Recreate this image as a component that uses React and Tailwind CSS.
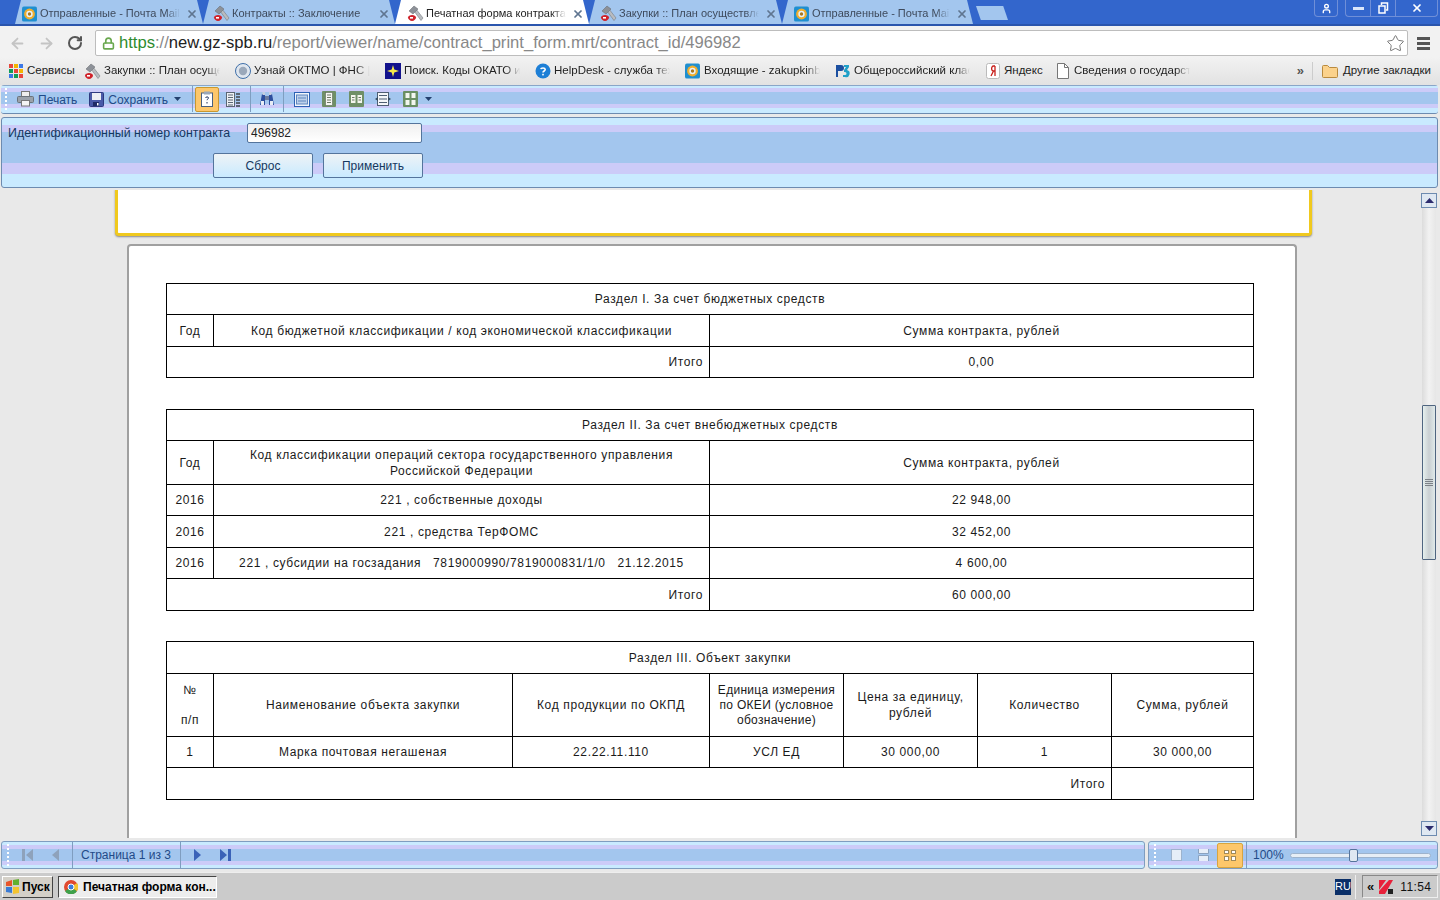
import { ArrowLeft, ArrowRight, RotateCw, Star, Lock, X, User } from "lucide-react";

const barStripes = "bg-[linear-gradient(to_bottom,#c9eaff_0,#c9eaff_3px,#cccbf8_3px,#cccbf8_7px,#a3c6ee_7px,#a3c6ee_19px,#cccbf8_19px,#cccbf8_23px,#c9eaff_23px,#c9eaff_100%)]";

const MailIcon = () => (
  <svg width="15" height="16" viewBox="0 0 16 16" className="shrink-0">
    <rect width="16" height="16" rx="2" fill="#1f8fd0" />
    <circle cx="8" cy="8" r="5.8" fill="#f0ae2e" />
    <circle cx="8" cy="8" r="3.4" fill="#e9f2f8" />
    <circle cx="8" cy="8" r="1.8" fill="#a9781f" />
  </svg>
);

const HammerIcon = () => (
  <svg width="17" height="17" viewBox="0 0 17 17" className="shrink-0">
    <path d="M7 6l2-2 7 9-2 2.5z" fill="#b9bcc0" stroke="#777c82" strokeWidth=".6" />
    <path d="M2 6l5-5 4 3-5 5z" fill="#8d9198" stroke="#62666c" strokeWidth=".5" />
    <path d="M1 12.5C1 11 3 10 5 10s4 1 4 2.5S7 16 5 16s-4-2-4-3.5z" fill="#d0222a" />
    <rect x="3" y="12" width="3" height="1.6" fill="#fff" />
  </svg>
);

const tabs = [
  { title: "Отправленные - Почта Mail", icon: <MailIcon />, w: "w-[188px] pl-[6px]" },
  { title: "Контракты :: Заключение", icon: <HammerIcon />, w: "w-[192px] pl-[10px]" },
  { title: "Печатная форма контракта", icon: <HammerIcon />, w: "w-[194px] pl-[12px]", active: true },
  { title: "Закупки :: План осуществления", icon: <HammerIcon />, w: "w-[193px] pl-[11px]" },
  { title: "Отправленные - Почта Mail", icon: <MailIcon />, w: "w-[191px] pl-[11px]" },
];

const bookmarks = [
  { title: "Сервисы", w: "w-[77px]", icon: <AppsIcon />, plain: true },
  { title: "Закупки :: План осуществления", w: "w-[150px]", icon: <HammerIcon /> },
  { title: "Узнай ОКТМО | ФНС | 77", w: "w-[150px]", icon: <SealIcon /> },
  { title: "Поиск. Коды ОКАТО и ОКТМО", w: "w-[150px]", icon: <StarBlueIcon /> },
  { title: "HelpDesk - служба техподдержки", w: "w-[150px]", icon: <HelpIcon /> },
  { title: "Входящие - zakupkinb@mail.ru", w: "w-[150px]", icon: <MailIcon /> },
  { title: "Общероссийский классификатор", w: "w-[150px]", icon: <RbIcon /> },
  { title: "Яндекс", w: "w-[70px]", icon: <YandexIcon />, plain: true },
  { title: "Сведения о государственных", w: "w-[150px]", icon: <PageIcon /> },
];

function AppsIcon() {
  const colors = ["#e8453c", "#f4b400", "#3b78e7", "#0f9d58", "#e8453c", "#f4b400", "#3b78e7", "#0f9d58", "#e8453c"];
  return (
    <div className="grid grid-cols-3 gap-px w-[14px] h-[14px] shrink-0">
      {colors.map((c, i) => <svg key={i} viewBox="0 0 4 4" className="w-full h-full"><rect width="4" height="4" fill={c} /></svg>)}
    </div>
  );
}

function SealIcon() {
  return (
    <svg width="16" height="16" viewBox="0 0 16 16" className="shrink-0">
      <circle cx="8" cy="8" r="7.5" fill="#dfe6ee" stroke="#3f6fa8" />
      <circle cx="8" cy="8" r="4.2" fill="#9aa8ba" />
    </svg>
  );
}

function StarBlueIcon() {
  return (
    <svg width="16" height="16" viewBox="0 0 16 16" className="shrink-0">
      <rect width="16" height="16" fill="#12128c" />
      <path d="M8 2l1.3 4.4L14 8l-4.7 1.6L8 14l-1.3-4.4L2 8l4.7-1.6z" fill="#f6e84a" />
    </svg>
  );
}

function HelpIcon() {
  return (
    <svg width="16" height="16" viewBox="0 0 16 16" className="shrink-0">
      <circle cx="8" cy="8" r="7.5" fill="#1d7fd6" />
      <path d="M5.8 6.2C6 4.6 10 4.4 10.2 6.4 10.3 8 8 8 8 9.6" fill="none" stroke="#fff" strokeWidth="1.6" />
      <rect x="7.2" y="10.8" width="1.6" height="1.6" fill="#fff" />
    </svg>
  );
}

function RbIcon() {
  return (
    <svg width="16" height="14" viewBox="0 0 16 14" className="shrink-0">
      <path d="M1 1h5a3 3 0 010 6H3v6H1z" fill="#1b4fa0" />
      <path d="M9 1h5v2l-2 3a3 3 0 01-2 7H8v-2h2a1 1 0 000-3H9V6l2-3H9z" fill="#20a0c8" />
    </svg>
  );
}

function YandexIcon() {
  return (
    <svg width="14" height="16" viewBox="0 0 14 16" className="shrink-0">
      <rect x=".5" y=".5" width="13" height="15" rx="2" fill="#fff" stroke="#bbb" />
      <path d="M9 3v10M9 3H7.5C5 3 5 7.8 7.5 8H9M7.5 8L5 13" fill="none" stroke="#c8201c" strokeWidth="1.3" />
    </svg>
  );
}

function PageIcon() {
  return (
    <svg width="12" height="16" viewBox="0 0 12 16" className="shrink-0">
      <path d="M.5.5h7l4 4v11H.5z" fill="#fff" stroke="#777" />
      <path d="M7.5.5v4h4" fill="none" stroke="#777" />
    </svg>
  );
}

const PrintIcon = () => (
  <svg width="17" height="16" viewBox="0 0 17 16" className="shrink-0">
    <rect x="4.5" y=".5" width="8" height="6" fill="#eee" stroke="#777" />
    <rect x=".5" y="5.5" width="16" height="6" rx="1" fill="#9aa1aa" stroke="#6b727b" />
    <rect x="4.5" y="9.5" width="8" height="5.5" fill="#f4f4f4" stroke="#777" />
  </svg>
);

const SaveIcon = () => (
  <svg width="15" height="15" viewBox="0 0 15 15" className="shrink-0">
    <rect x=".5" y=".5" width="14" height="14" rx="1" fill="#4a5aa8" stroke="#2e3a80" />
    <rect x="3" y="1" width="9" height="7" fill="#eceef4" />
    <rect x="4" y="10" width="6" height="4" fill="#1f2a66" />
    <rect x="8" y="11" width="1.5" height="2.5" fill="#fff" />
  </svg>
);

const Grip = () => (
  <div className="flex flex-col gap-[2px] shrink-0">
    {[0, 1, 2, 3, 4, 5].map((i) => <span key={i} className="block w-[2px] h-[2px] bg-white" />)}
  </div>
);

const Sep = ({ className = "" }) => <span className={`block w-px h-[26px] bg-[#7f9dc0] shrink-0 ${className}`} />;

const Caret = ({ className = "" }) => (
  <svg width="7" height="4" viewBox="0 0 7 4" className={`shrink-0 ${className}`}><path d="M0 0h7L3.5 4z" fill="#23406e" /></svg>
);

const Binoculars = ({ className = "" }) => (
  <svg width="16" height="16" viewBox="0 0 16 16" className={`shrink-0 ${className}`}>
    <path d="M1 14l2-11h3v11z" fill="#2d4f9e" />
    <path d="M15 14l-2-11h-3v11z" fill="#2d4f9e" />
    <rect x="3.5" y="1" width="2.5" height="3" fill="#c6cfe0" />
    <rect x="10" y="1" width="2.5" height="3" fill="#c6cfe0" />
    <rect x="6" y="5" width="4" height="4" fill="#6c7da0" />
    <rect x="2" y="10" width="3" height="4" fill="#e8edf6" />
    <rect x="11" y="10" width="3" height="4" fill="#e8edf6" />
  </svg>
);

const ColumnsIcon = () => (
  <svg width="15" height="15" viewBox="0 0 15 15" className="shrink-0">
    <rect x=".5" y=".5" width="8" height="14" fill="#eef1f5" stroke="#5b6573" />
    <path d="M2 3h5M2 5.5h5M2 8h5M2 10.5h5M2 13h5" stroke="#5b6573" />
    <path d="M10 2h4M10 5h4M10 8h4M10 11h4M10 14h4" stroke="#5b6573" strokeWidth="2" />
  </svg>
);

const PageWideIcon = () => (
  <svg width="16" height="15" viewBox="0 0 16 15" className="shrink-0">
    <rect x=".5" y=".5" width="15" height="14" fill="#f2f6fb" stroke="#2d62b5" />
    <rect x="2.5" y="3" width="11" height="9" fill="#bcd0ea" stroke="#5f86bf" />
    <path d="M4 6h8M4 9h8" stroke="#5f86bf" />
  </svg>
);

const PageHighIcon = () => (
  <svg width="14" height="16" viewBox="0 0 14 16" className="shrink-0">
    <rect width="14" height="16" rx="1" fill="#6f8f66" />
    <rect x="3.5" y="1.5" width="7" height="13" fill="#f6f7f2" stroke="#5e6a55" strokeWidth=".6" />
    <path d="M5 4h4M5 6.5h4M5 9h4M5 11.5h4" stroke="#6d7864" />
  </svg>
);

const TwoPagesIcon = () => (
  <svg width="15" height="16" viewBox="0 0 15 16" className="shrink-0">
    <rect width="15" height="16" rx="1" fill="#6f8f66" />
    <rect x="2" y="4" width="4.5" height="8" fill="#f4f6ee" />
    <rect x="8.5" y="4" width="4.5" height="8" fill="#f4f6ee" />
    <path d="M3 6.5h2.5M3 9h2.5M9.5 6.5H12M9.5 9H12" stroke="#6d7864" />
  </svg>
);

const ContinuousIcon = () => (
  <svg width="16" height="14" viewBox="0 0 16 14" className="shrink-0">
    <rect x="2.5" y=".5" width="11" height="13" fill="#f4f6f8" stroke="#4f5f73" />
    <path d="M4 3.5h8M4 7h8M4 10.5h8" stroke="#4f5f73" />
    <path d="M3 5L0 7l3 2zM13 5l3 2-3 2z" fill="#34495f" />
  </svg>
);

const FourPagesIcon = () => (
  <svg width="15" height="16" viewBox="0 0 15 16" className="shrink-0">
    <rect width="15" height="16" rx="1" fill="#6a8f62" />
    <rect x="2.5" y="2" width="4" height="5" fill="#f3f6ee" />
    <rect x="8.5" y="2" width="4" height="5" fill="#f3f6ee" />
    <rect x="2.5" y="9" width="4" height="5" fill="#f3f6ee" />
    <rect x="8.5" y="9" width="4" height="5" fill="#f3f6ee" />
  </svg>
);

const Cell = ({ className = "", ...props }) => (
  <td className={`border border-black text-center align-middle p-0 ${className}`} {...props} />
);

const tableFont = "w-full table-fixed border-collapse text-[12px] leading-[16px] tracking-[0.63px] text-[#1a1a1a]";

export default function App() {
  return (
    <div className="w-[1440px] h-[900px] overflow-hidden flex flex-col bg-[#e9e9e9] font-['Liberation_Sans',sans-serif] text-[12px]">
      {/* вкладки */}
      <div className="h-[26px] bg-[#3366cc] flex items-start shrink-0 pl-[15px] border-b-2 border-[#2a55ad]">
        {tabs.map((t) => (
          <div
            key={t.title + t.w}
            className={`${t.w} h-[24px] flex items-center gap-[2px] pr-[5px] pt-[3px] text-[11px] [clip-path:polygon(0_100%,6px_0,calc(100%-6px)_0,100%_100%)] ${t.active ? "bg-white text-[#222]" : "bg-[#a3c6ee] text-[#3e4a5c]"}`}
          >
            <div className="w-[17px] flex justify-center shrink-0">{t.icon}</div>
            <span className="flex-1 whitespace-nowrap overflow-hidden [mask-image:linear-gradient(to_right,#000_90%,transparent)]">{t.title}</span>
            <X size={12} strokeWidth={3.5} className="shrink-0 ml-[4px] text-[#5f7590]" />
          </div>
        ))}
        <div className="ml-[3px] mt-[6px] w-[32px] h-[14px] bg-[#a3c6ee] [clip-path:polygon(0_0,85%_0,100%_100%,15%_100%)]" />
        <div className="flex-1" />
        <div className="flex items-center h-[17px] mr-[2px]">
          <div className="w-[24px] h-[17px] border border-t-0 border-[#6f8fd8] rounded-b flex items-center justify-center mr-[7px]">
            <User size={11} strokeWidth={3} className="text-white" />
          </div>
          <div className="w-[25px] h-[17px] border border-t-0 border-r-0 border-[#6f8fd8] rounded-bl flex items-center justify-center">
            <span className="block w-[11px] h-[3px] bg-[#dbe6fa]" />
          </div>
          <div className="w-[25px] h-[17px] border border-t-0 border-r-0 border-[#6f8fd8] flex items-center justify-center">
            <svg width="11" height="12" viewBox="0 0 11 12"><path d="M3.5 3V1h6v7H8M1 4h6v7H1z" fill="none" stroke="#fff" strokeWidth="1.5" /></svg>
          </div>
          <div className="w-[43px] h-[17px] border border-t-0 border-[#6f8fd8] rounded-br flex items-center justify-center">
            <X size={12} strokeWidth={3.5} className="text-white" />
          </div>
        </div>
      </div>

      {/* адресная строка */}
      <div className="h-[31px] bg-[#f2f2f2] flex items-center shrink-0 pl-[9px] pt-[3px]">
        <ArrowLeft size={17} strokeWidth={2.5} className="text-[#c4c4c4]" />
        <ArrowRight size={17} strokeWidth={2.5} className="text-[#c4c4c4] ml-[12px]" />
        <RotateCw size={16} strokeWidth={3} className="text-[#555] ml-[12px]" />
        <div className="ml-[12px] w-[1313px] h-[26px] bg-white border border-[#bdbdbd] rounded-[2px] flex items-center pl-[6px] text-[16.6px] whitespace-nowrap">
          <Lock size={13} strokeWidth={3} className="text-[#6aa84f] mr-[4px] shrink-0" />
          <span className="text-[#2e8b2e]">https</span>
          <span className="text-[#888]">://</span>
          <span className="text-[#222]">new.gz-spb.ru</span>
          <span className="text-[#888]">/report/viewer/name/contract_print_form.mrt/contract_id/496982</span>
          <div className="flex-1" />
          <Star size={19} strokeWidth={1.25} className="text-[#777] mr-[2px] shrink-0" />
        </div>
        <div className="ml-[9px] flex flex-col gap-[2px]">
          <span className="block w-[13px] h-[3px] bg-[#555]" />
          <span className="block w-[13px] h-[3px] bg-[#555]" />
          <span className="block w-[13px] h-[3px] bg-[#555]" />
        </div>
      </div>

      {/* закладки */}
      <div className="h-[28px] bg-[linear-gradient(to_bottom,#f2f2f2,#e2e2e2)] flex items-center shrink-0 pl-[7px] text-[#222] text-[11.5px] whitespace-nowrap">
        {bookmarks.map((b) => (
          <div key={b.title} className={`${b.w} flex items-center shrink-0 ${b.plain ? "" : "pr-[14px]"}`}>
            <div className="w-[17px] flex justify-center shrink-0">{b.icon}</div>
            <span className={`ml-[3px] flex-1 overflow-hidden ${b.plain ? "" : "[mask-image:linear-gradient(to_right,#000_88%,transparent)]"}`}>{b.title}</span>
          </div>
        ))}
        <div className="flex-1" />
        <span className="text-[#555] font-bold text-[13px]">»</span>
        <span className="ml-[8px] block w-px h-[18px] bg-[#ccc]" />
        <div className="ml-[9px] flex items-center gap-[5px] pr-[9px]">
          <svg width="16" height="14" viewBox="0 0 16 14" className="shrink-0"><path d="M.5 2.5a1 1 0 011-1h4l2 2h7a1 1 0 011 1v8a1 1 0 01-1 1h-13a1 1 0 01-1-1z" fill="#fbd28c" stroke="#b98a3e" /></svg>
          <span>Другие закладки</span>
        </div>
      </div>

      {/* панель просмотра */}
      <div className="ml-[1px] w-[1437px] h-[29px] shrink-0 flex items-center pl-[4px] rounded-[3px] border-b border-[#6d8bb0] text-[#1f4a88] bg-[linear-gradient(to_bottom,#8aa6c8_0,#8aa6c8_1px,#c9eaff_1px,#c9eaff_3px,#cccbf8_3px,#cccbf8_7px,#a3c6ee_7px,#a3c6ee_19px,#cccbf8_19px,#cccbf8_23px,#c9eaff_23px,#c9eaff_100%)]">
        <Grip />
        <div className="ml-[10px]"><PrintIcon /></div>
        <span className="ml-[4px] pt-[2px]">Печать</span>
        <div className="ml-[12px]"><SaveIcon /></div>
        <span className="ml-[4px] pt-[2px]">Сохранить</span>
        <Caret className="ml-[6px]" />
        <Sep className="ml-[11px]" />
        <div className="ml-[2px] w-[24px] h-[25px] bg-[#fdc76b] border border-[#c9972f] rounded-[2px] flex items-center justify-center">
          <svg width="12" height="16" viewBox="0 0 12 16"><rect x=".5" y="2" width="11" height="13.5" fill="#fff" stroke="#49607f" /><rect x="3" y=".5" width="6" height="3" fill="#9aa7b8" /><path d="M4.5 7c.3-1.5 3-1.5 3 0 0 1-1.5 1-1.5 2.2M6 11v1.5" fill="none" stroke="#1a2e5a" /></svg>
        </div>
        <div className="ml-[7px]"><ColumnsIcon /></div>
        <Sep className="ml-[9px]" />
        <Binoculars className="ml-[8px]" />
        <Sep className="ml-[8px]" />
        <div className="ml-[10px]"><PageWideIcon /></div>
        <div className="ml-[12px]"><PageHighIcon /></div>
        <div className="ml-[13px]"><TwoPagesIcon /></div>
        <div className="ml-[11px]"><ContinuousIcon /></div>
        <div className="ml-[12px]"><FourPagesIcon /></div>
        <Caret className="ml-[7px]" />
      </div>

      {/* параметры */}
      <div className="mt-[3px] ml-[1px] w-[1437px] h-[71px] shrink-0 rounded-[3px] border border-[#6d8bb0] text-[#15375f] bg-[linear-gradient(to_bottom,#c9eaff_0,#c9eaff_7px,#cccbf8_7px,#cccbf8_14px,#a3c6ee_14px,#a3c6ee_45px,#cccbf8_45px,#cccbf8_56px,#c9eaff_56px,#c9eaff_100%)]">
        <div className="flex items-center pl-[6px] pt-[5px]">
          <span className="w-[239px] whitespace-nowrap text-[12.4px]">Идентификационный номер контракта</span>
          <input readOnly value="496982" className="w-[175px] h-[20px] px-[3px] bg-[linear-gradient(to_bottom,#f0f0f0,#fff)] border border-[#54749c] rounded-[2px] text-[12px] text-[#222] outline-none" />
        </div>
        <div className="flex pl-[211px] gap-[10px] mt-[10px]">
          {["Сброс", "Применить"].map((l) => (
            <button key={l} className="w-[100px] h-[25px] pt-[1px] border border-[#54749c] rounded-[2px] bg-[linear-gradient(to_bottom,#eef3f6,#c9eaff)] text-[#15375f] text-[12px]">{l}</button>
          ))}
        </div>
      </div>

      {/* отчет */}
      <div className="mt-[2px] h-[648px] shrink-0 flex overflow-hidden">
        <div className="w-[1420px] shrink-0 overflow-hidden">
          <div className="-mt-[1px] ml-[115px] w-[1197px] h-[47px] bg-white border-x-[3px] border-b-[3px] border-[#f0c91e] rounded-b-[4px] shadow-[0_1px_2px_#888]" />
          <div className="mt-[8px] ml-[127px] w-[1170px] h-[640px] bg-white border-x-2 border-t-2 border-[#a0a0a0] rounded-t-[4px] pt-[37px] pl-[37px]">
            <div className="w-[1088px]">
              <table className={tableFont}>
                <colgroup><col className="w-[47px]" /><col className="w-[496px]" /><col /></colgroup>
                <tbody>
                  <tr className="h-[31px]"><Cell colSpan={3}>Раздел I. За счет бюджетных средств</Cell></tr>
                  <tr className="h-[32px]"><Cell>Год</Cell><Cell>Код бюджетной классификации / код экономической классификации</Cell><Cell>Сумма контракта, рублей</Cell></tr>
                  <tr className="h-[31px]"><Cell colSpan={2} className="text-right pr-[6px]">Итого</Cell><Cell>0,00</Cell></tr>
                </tbody>
              </table>

              <table className={`${tableFont} mt-[31px]`}>
                <colgroup><col className="w-[47px]" /><col className="w-[496px]" /><col /></colgroup>
                <tbody>
                  <tr className="h-[31px]"><Cell colSpan={3}>Раздел II. За счет внебюджетных средств</Cell></tr>
                  <tr className="h-[44px]"><Cell>Год</Cell><Cell>Код классификации операций сектора государственного управления<br />Российской Федерации</Cell><Cell>Сумма контракта, рублей</Cell></tr>
                  <tr className="h-[31px]"><Cell>2016</Cell><Cell>221 , собственные доходы</Cell><Cell>22 948,00</Cell></tr>
                  <tr className="h-[32px]"><Cell>2016</Cell><Cell>221 , средства ТерФОМС</Cell><Cell>32 452,00</Cell></tr>
                  <tr className="h-[31px]"><Cell>2016</Cell><Cell className="whitespace-pre">221 , субсидии на госзадания   7819000990/7819000831/1/0   21.12.2015</Cell><Cell>4 600,00</Cell></tr>
                  <tr className="h-[32px]"><Cell colSpan={2} className="text-right pr-[6px]">Итого</Cell><Cell>60 000,00</Cell></tr>
                </tbody>
              </table>

              <table className={`${tableFont} mt-[30px]`}>
                <colgroup>
                  <col className="w-[47px]" /><col className="w-[299px]" /><col className="w-[197px]" /><col className="w-[134px]" /><col className="w-[134px]" /><col className="w-[134px]" /><col />
                </colgroup>
                <tbody>
                  <tr className="h-[32px]"><Cell colSpan={7}>Раздел III. Объект закупки</Cell></tr>
                  <tr className="h-[63px]">
                    <Cell><div className="leading-[30px]">№<br />п/п</div></Cell>
                    <Cell>Наименование объекта закупки</Cell>
                    <Cell>Код продукции по ОКПД</Cell>
                    <Cell className="leading-[15px] tracking-[0.3px]">Единица измерения<br />по ОКЕИ (условное<br />обозначение)</Cell>
                    <Cell>Цена за единицу,<br />рублей</Cell>
                    <Cell>Количество</Cell>
                    <Cell>Сумма, рублей</Cell>
                  </tr>
                  <tr className="h-[31px]"><Cell>1</Cell><Cell>Марка почтовая негашеная</Cell><Cell>22.22.11.110</Cell><Cell>УСЛ ЕД</Cell><Cell>30 000,00</Cell><Cell>1</Cell><Cell>30 000,00</Cell></tr>
                  <tr className="h-[32px]"><Cell colSpan={6} className="text-right pr-[6px]">Итого</Cell><Cell /></tr>
                </tbody>
              </table>
            </div>
          </div>
        </div>

        {/* скролл */}
        <div className="w-[16px] ml-[1px] pt-[3px] flex flex-col items-center shrink-0">
          <div className="w-[16px] h-[15px] bg-[#dfe8f2] border border-[#6d8bb0] flex items-center justify-center">
            <svg width="9" height="5" viewBox="0 0 9 5"><path d="M4.5 0L9 5H0z" fill="#2c2c6e" /></svg>
          </div>
          <div className="w-[14px] flex-1 bg-[linear-gradient(to_right,#dcdcdc,#f2f2f2,#e6e6e6)] flex flex-col">
            <div className="h-[197px]" />
            <div className="h-[155px] w-[14px] bg-[linear-gradient(to_right,#e6f0ee,#c9cfd2,#e0eaea)] border border-[#4f6580] rounded-[1px] flex flex-col gap-[1px] items-center justify-center">
              {[0, 1, 2, 3].map((i) => <span key={i} className="block w-[8px] h-px bg-[#7c8288]" />)}
            </div>
          </div>
          <div className="w-[16px] h-[15px] mb-[2px] bg-[#dfe8f2] border border-[#6d8bb0] flex items-center justify-center">
            <svg width="9" height="5" viewBox="0 0 9 5"><path d="M0 0h9L4.5 5z" fill="#2c2c6e" /></svg>
          </div>
        </div>
      </div>

      {/* нижняя панель */}
      <div className="mt-[3px] ml-[1px] w-[1437px] h-[28px] shrink-0 flex gap-[3px]">
        <div className={`w-[1144px] rounded-[3px] border border-[#7f9dc0] flex items-center pl-[5px] text-[#1f4a88] ${barStripes}`}>
          <Grip />
          <svg width="11" height="12" viewBox="0 0 11 12" className="ml-[13px] shrink-0"><path d="M0 0h3v12H0zM11 0v12L4 6z" fill="#8ea2bb" /></svg>
          <svg width="7" height="12" viewBox="0 0 7 12" className="ml-[19px] shrink-0"><path d="M7 0v12L0 6z" fill="#8ea2bb" /></svg>
          <Sep className="ml-[13px]" />
          <span className="ml-[8px] text-[12px] whitespace-nowrap">Страница 1 из 3</span>
          <Sep className="ml-[9px]" />
          <svg width="7" height="12" viewBox="0 0 7 12" className="ml-[13px] shrink-0"><path d="M0 0v12l7-6z" fill="#3a62b8" /></svg>
          <svg width="11" height="12" viewBox="0 0 11 12" className="ml-[19px] shrink-0"><path d="M0 0v12l7-6zM8 0h3v12H8z" fill="#3a62b8" /></svg>
        </div>
        <div className={`flex-1 rounded-[3px] border border-[#7f9dc0] flex items-center pl-[5px] text-[#1f4a88] ${barStripes}`}>
          <Grip />
          <svg width="11" height="12" viewBox="0 0 11 12" className="ml-[15px] shrink-0"><rect x=".5" y=".5" width="10" height="11" fill="#e6eef8" stroke="#9db3cd" /></svg>
          <svg width="11" height="12" viewBox="0 0 11 12" className="ml-[16px] shrink-0"><path d="M.5 0v4.5h10V0M.5 12V6.5h10V12" fill="#e6eef8" stroke="#8aa2c0" /></svg>
          <div className="ml-[8px] w-[26px] h-[25px] bg-[#fdc76b] border border-[#d8a53f] rounded-[2px] grid grid-cols-2 gap-[2px] p-[6px]">
            {[0, 1, 2, 3].map((i) => <span key={i} className="block bg-white border border-[#a08a5a]" />)}
          </div>
          <Sep className="ml-[3px]" />
          <span className="ml-[6px]">100%</span>
          <div className="ml-[6px] w-[141px] h-[5px] bg-[#e6eef6] border border-[#9db3cd] rounded-full flex items-center">
            <div className="ml-[58px] w-[9px] h-[13px] bg-[#dfe8f2] border border-[#54749c] rounded-[2px] shrink-0" />
          </div>
        </div>
      </div>

      {/* панель задач */}
      <div className="mt-[3px] flex-1 bg-[#cbcbcb] border-t border-[#eee] flex items-center pl-[2px]">
        <div className="w-[51px] h-[22px] bg-[#d4d0c8] border border-t-white border-l-white border-r-[#444] border-b-[#444] flex items-center pl-[2px] gap-[2px] font-bold text-[12px] text-black">
          <svg width="15" height="15" viewBox="0 0 15 15" className="shrink-0"><path d="M1 3l6-2v6H1z" fill="#e8552a" /><path d="M8 1l6-1v6H8z" fill="#62b030" /><path d="M1 8h6v6l-6-1z" fill="#3a7bd5" /><path d="M8 8h6v6l-6 1z" fill="#f4c430" /></svg>
          Пуск
        </div>
        <div className="ml-[5px] w-[159px] h-[22px] bg-[#ededed] border border-t-[#444] border-l-[#444] border-r-white border-b-white flex items-center pl-[5px] gap-[5px] font-bold text-[12px] text-black whitespace-nowrap">
          <svg width="14" height="14" viewBox="0 0 14 14" className="shrink-0"><circle cx="7" cy="7" r="7" fill="#e0492f" /><path d="M7 7L1 11a7 7 0 0012 0z" fill="#3fa14a" /><path d="M7 7l6 4a7 7 0 000-8z" fill="#f4c430" /><circle cx="7" cy="7" r="3" fill="#3b7ddd" stroke="#fff" /></svg>
          Печатная форма кон...
        </div>
        <div className="flex-1" />
        <div className="w-[16px] h-[16px] bg-[#0a2f68] text-white text-[11px] flex items-center justify-center">RU</div>
        <span className="ml-[4px] block w-px h-[24px] bg-[#eee]" />
        <div className="ml-[6px] mr-[2px] w-[76px] h-[23px] border border-[#888] border-r-[#eee] border-b-[#eee] flex items-center pl-[4px] text-[12px] text-[#111]">
          <span className="font-bold text-[13px]">«</span>
          <svg width="14" height="14" viewBox="0 0 14 14" className="ml-[5px] shrink-0"><path d="M0 0h7L0 10z" fill="#e8213a" /><path d="M0 11L10 0h4L6 14H0z" fill="#e8213a" /><path d="M9 9h5v5H9z" fill="#222" /></svg>
          <span className="ml-[7px] tracking-[0.4px]">11:54</span>
        </div>
      </div>
    </div>
  );
}
